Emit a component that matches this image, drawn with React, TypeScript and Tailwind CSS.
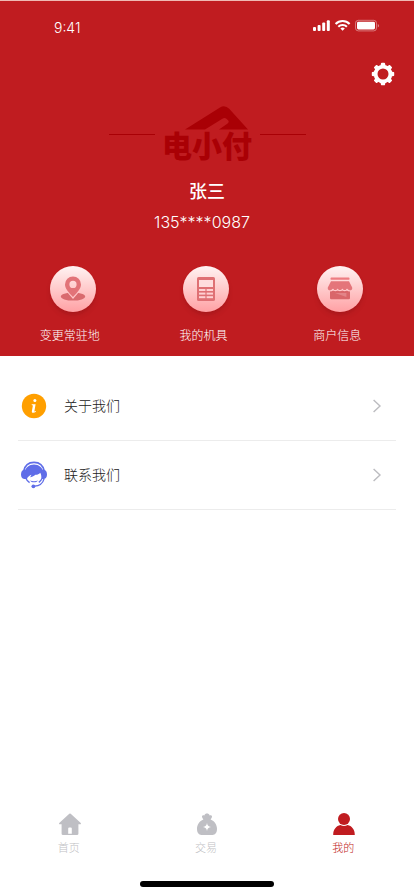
import type { ReactNode } from 'react'

type ShortcutProps = {
  label: string
  icon: ReactNode
}

type MenuRowProps = {
  label: string
  icon: ReactNode
}

type TabProps = {
  label: string
  icon: ReactNode
  active?: boolean
}

const StatusBar = () => {
  return (
    <div className="flex items-center justify-between pt-[15px] pl-[54px] pr-[34px]">
      <span className="text-sm leading-6 font-light">9:41</span>
      <svg width="68" height="14" viewBox="0 0 68 14" className="-mt-1" fill="#fff">
        <rect x="1" y="8" width="3" height="4" rx="1" />
        <rect x="5.6" y="6" width="3" height="6" rx="1" />
        <rect x="10.2" y="3.6" width="3" height="8.4" rx="1" />
        <rect x="14.8" y="1.2" width="3" height="10.8" rx="1" />
        <g fill="none" stroke="#fff" strokeWidth="2.1">
          <path d="M23.6 4.9a10 10 0 0 1 14 0" />
          <path d="M26.3 7.7a6.2 6.2 0 0 1 8.6 0" />
        </g>
        <path d="M28.4 9.5a3.4 3.4 0 0 1 4.4 0L30.6 11.8z" />
        <rect x="43.5" y="1.3" width="21" height="10.6" rx="2.8" fill="none" stroke="#fff" strokeOpacity="0.4" />
        <rect x="45" y="2.8" width="18" height="7.6" rx="1.4" />
        <path d="M65.8 5v3.4c1.6-.5 1.6-2.9 0-3.4z" fillOpacity="0.5" />
      </svg>
    </div>
  )
}

const GearIcon = () => {
  const angles = [0, 45, 90, 135, 180, 225, 270, 315]
  return (
    <svg width="24" height="24" viewBox="0 0 24 24">
      <circle cx="12" cy="12" r="7.4" fill="none" stroke="#fff" strokeWidth="3.8" />
      {angles.map((angle) => (
        <path
          key={angle}
          d="M9.4 4.2 10 1.3Q10.200.8 10.800.8H13.200Q13.800.8 14 1.3L14.600 4.2z"
          fill="#fff"
          transform={`rotate(${angle} 12 12)`}
        />
      ))}
    </svg>
  )
}

const Logo = () => {
  return (
    <div className="flex items-center justify-center text-[#a90005]">
      <span className="h-px w-[46px] bg-[#a90005]" />
      <div className="flex w-[105px] flex-col items-center">
        <svg width="64" height="24" viewBox="0 0 64 24" className="ml-5" fill="currentColor">
          <path d="M0 23.4 35 1.4Q40-1.4 44.2 2.8L63 23.4H34L42.6 17.4Q44.6 15.8 43 14.2L41.4 12.8Q39.6 11.4 37.4 12.8L20 23.4z" />
        </svg>
        <span className="text-[30px] leading-8 font-black">电小付</span>
      </div>
      <span className="h-px w-[46px] bg-[#a90005]" />
    </div>
  )
}

const LocationIcon = () => {
  return (
    <svg width="26" height="26" viewBox="0 0 26 26">
      <ellipse cx="13" cy="20.6" rx="12.2" ry="4" fill="#d96a6e" />
      <path d="M13 23 6.6 15.4h12.8z" fill="#ffc6c8" />
      <path
        d="M13 21C8.6 16.2 5 12.4 5 8.4a8 8 0 0 1 16 0c0 4-3.6 7.8-8 12.6zM13 4.8a3.6 3.6 0 1 0 0 7.2 3.6 3.6 0 0 0 0-7.2z"
        fill="#e27378"
        fillRule="evenodd"
      />
    </svg>
  )
}

const TerminalIcon = () => {
  return (
    <svg width="26" height="26" viewBox="0 0 26 26">
      <rect x="4" y="1" width="18" height="24" rx="1.6" fill="#df7074" />
      <rect x="6" y="4" width="14" height="7" fill="#ffdcdd" />
      <g fill="#ffd0d2">
        <rect x="6" y="13" width="6.4" height="2" />
        <rect x="13.6" y="13" width="6.4" height="2" />
        <rect x="6" y="16.6" width="6.4" height="2" />
        <rect x="13.6" y="16.6" width="6.4" height="2" />
        <rect x="6" y="20.2" width="6.4" height="2" />
        <rect x="13.6" y="20.2" width="6.4" height="2" />
      </g>
    </svg>
  )
}

const ShopIcon = () => {
  return (
    <svg width="26" height="26" viewBox="0 0 26 26">
      <rect x="3.6" y="1.6" width="18.8" height="2.2" rx="0.6" fill="#ee7d82" />
      <path d="M3 14.4h20V22a1.2 1.2 0 0 1-1.2 1.2H4.2A1.2 1.2 0 0 1 3 22z" fill="#d9666a" />
      <path d="M8 17h11.4v4z" fill="#e38488" />
      <path
        d="M4 5.2h18L25.2 11.4c.4 1.8-.8 3-2.6 3-1.2 0-2-.5-2.6-1.3-1.2 1.7-3.4 1.7-4.6 0-1.2 1.7-3.6 1.7-4.8 0-1.2 1.7-3.4 1.7-4.6 0-.6.8-1.4 1.3-2.6 1.3-1.8 0-3-1.2-2.6-3z"
        fill="#e4757a"
      />
      <path
        d="M2.8 15c1.4 0 2.4-.6 3.2-1.5 1.2 1.5 3.4 1.5 4.6 0 1.2 1.5 3.6 1.5 4.8 0 1.2 1.5 3.4 1.5 4.6 0 .8.9 1.8 1.5 3.2 1.5"
        fill="none"
        stroke="#ffc9cb"
        strokeWidth="1.2"
      />
    </svg>
  )
}

const InfoIcon = () => {
  return (
    <svg width="26" height="26" viewBox="0 0 26 26">
      <circle cx="13" cy="13" r="12.2" fill="#ff9f00" />
      <circle cx="13.9" cy="7.6" r="1.5" fill="#fff" />
      <path
        d="M10.8 11.2h3.8l-1.2 6.8c-.1.7.5.7 1.4.1l.2.7c-2.2 1.6-4.6 1.5-4.1-.9l1-5.4-1.3-.5z"
        fill="#fff"
      />
    </svg>
  )
}

const SupportIcon = () => {
  return (
    <svg width="26" height="28" viewBox="0 0 26 28" fill="#5f6de8">
      <path
        d="M2.6 10.4C3.8 4.6 8 1.4 13 1.4s9.200 3.2 10.4 9"
        fill="none"
        stroke="#5f6de8"
        strokeWidth="1.6"
      />
      <path d="M3.600 18V11.600C4.200 6.400 8.200 3.400 13 3.400s8.800 3 9.400 8.200V18h-2c.2-2.800-.2-4.600-1.200-6.200-1.400 1.600-3.200 2.200-4.800 2-1.800 1.600-3.600 2.200-5.400 2.400.8-.8 1.200-1.600 1.400-2.400-2.200 1-3.800 2.200-4.400 4.200z" />
      <path d="M5.200 8.800H3.200C1 9.200 0 11 0 13.400s1 4.200 3.200 4.600h2z" />
      <path d="M20.800 8.800h2c2.200.4 3.200 2.200 3.200 4.600s-1 4.200-3.200 4.600h-2z" />
      <path
        d="M5 17.400c.8 2 2 3.200 3.600 4.200M23.200 17.600c-1.400 4.800-4.800 7.400-9.800 7.600M21 17.400c-.8 1.800-1.800 3-3.200 4"
        fill="none"
        stroke="#5f6de8"
        strokeWidth="1.3"
      />
      <path d="M9 19.400c2.400 1 5.600 1 8 0-1.600 2.600-6.400 2.600-8 0z" />
      <circle cx="12.4" cy="25.3" r="1.9" />
    </svg>
  )
}

const HomeIcon = () => {
  return (
    <svg width="24" height="24" viewBox="0 0 24 24" fill="currentColor">
      <path
        d="M11.3 1.7q.7-.6 1.4 0l9.8 9c.8.8.6 1.6-.5 1.6h-1.6v9.5c0 .7-.4 1.1-1.1 1.1H4.7c-.7 0-1.1-.4-1.1-1.1v-9.5H2c-1.1 0-1.3-.8-.5-1.6zM10.2 21.8h3.6v-5.4a1 1 0 0 0-1-1h-1.6a1 1 0 0 0-1 1z"
        fillRule="evenodd"
      />
    </svg>
  )
}

const MoneyBagIcon = () => {
  return (
    <svg width="24" height="24" viewBox="0 0 24 24" fill="currentColor">
      <path
        d="M7 5c-.2-1.4 1-2 2.4-1.5C10 .9 14 .9 14.6 3.5 16 3 17.2 3.6 17 5c-.2.9-.9 1.6-1.4 2.4 4 1.7 6.4 5.2 6.4 9.4 0 4-1.8 6.100-4.4 6.100H6.4C3.8 22.9 2 20.8 2 16.8c0-4.200 2.400-7.700 6.400-9.400C7.900 6.600 7.200 5.900 7 5zM12 11c-.5 2.600-1.400 3.500-4 4 2.600.5 3.500 1.400 4 4 .5-2.600 1.400-3.500 4-4-2.600-.5-3.500-1.400-4-4z"
        fillRule="evenodd"
      />
    </svg>
  )
}

const ProfileIcon = () => {
  return (
    <svg width="24" height="24" viewBox="0 0 24 24" fill="currentColor">
      <circle cx="12" cy="7" r="6" />
      <path d="M1.2 22.9c0-5.4 3.2-9 7.2-9.8 2.4 1.3 4.8 1.3 7.2 0 4 .8 7.2 4.4 7.2 9.8z" />
    </svg>
  )
}

const Shortcut = ({ label, icon }: ShortcutProps) => {
  return (
    <button type="button" className="flex flex-col items-center">
      <span className="pl-1.5">
        <span className="flex h-[46px] w-[46px] items-center justify-center rounded-full bg-linear-to-b from-[#fff3f3] to-[#ffa0a4] shadow-md">
          {icon}
        </span>
      </span>
      <span className="mt-3.5 text-xs leading-5 font-light">{label}</span>
    </button>
  )
}

const MenuRow = ({ label, icon }: MenuRowProps) => {
  return (
    <li>
      <a
        href="#"
        className="flex h-[69px] items-center border-b border-[#ececec] pr-3.5 pl-0.5"
      >
        <span className="flex w-7 justify-center">{icon}</span>
        <span className="ml-4 flex-1 text-sm font-light">{label}</span>
        <svg width="10" height="14" viewBox="0 0 10 14" fill="none" stroke="#bcbcc0" strokeWidth="1.4">
          <path d="M1.6 1 8 7l-6.4 6" />
        </svg>
      </a>
    </li>
  )
}

const Tab = ({ label, icon, active }: TabProps) => {
  return (
    <a
      href="#"
      className={`flex flex-col items-center gap-1 ${
        active ? 'text-[#c01c20]' : 'text-[#bfbfc4]'
      }`}
    >
      <span className="pl-0.5">{icon}</span>
      <span className="text-[11px] leading-4 font-light">{label}</span>
    </a>
  )
}

export default function App() {
  return (
    <div className="flex min-h-screen flex-col bg-white font-['Inter','Noto_Sans_CJK_SC',sans-serif] text-[#222222]">
      <header className="border-t border-[#efb9b3] bg-[#c01c20] pb-2.5 text-white">
        <StatusBar />
        <div className="mt-[22px] flex justify-end pr-[19px]">
          <button type="button" aria-label="设置">
            <GearIcon />
          </button>
        </div>
        <div className="mt-5">
          <Logo />
        </div>
        <h1 className="mt-4 text-center text-lg leading-7 font-medium">张三</h1>
        <p className="mt-0.5 pr-2.5 text-center text-base leading-7 font-light">135****0987</p>
        <div className="mt-[30px] grid grid-cols-3 pr-2.5 pl-[3px]">
          <Shortcut label="变更常驻地" icon={<LocationIcon />} />
          <Shortcut label="我的机具" icon={<TerminalIcon />} />
          <Shortcut label="商户信息" icon={<ShopIcon />} />
        </div>
      </header>

      <main className="flex-1 px-[18px] pt-4">
        <ul>
          <MenuRow label="关于我们" icon={<InfoIcon />} />
          <MenuRow label="联系我们" icon={<SupportIcon />} />
        </ul>
      </main>

      <nav className="grid grid-cols-3 pr-0.5">
        <Tab label="首页" icon={<HomeIcon />} />
        <Tab label="交易" icon={<MoneyBagIcon />} />
        <Tab label="我的" icon={<ProfileIcon />} active />
      </nav>
      <div className="mx-auto mt-[25px] mb-[9px] h-[6px] w-[134px] rounded-full bg-black" />
    </div>
  )
}
